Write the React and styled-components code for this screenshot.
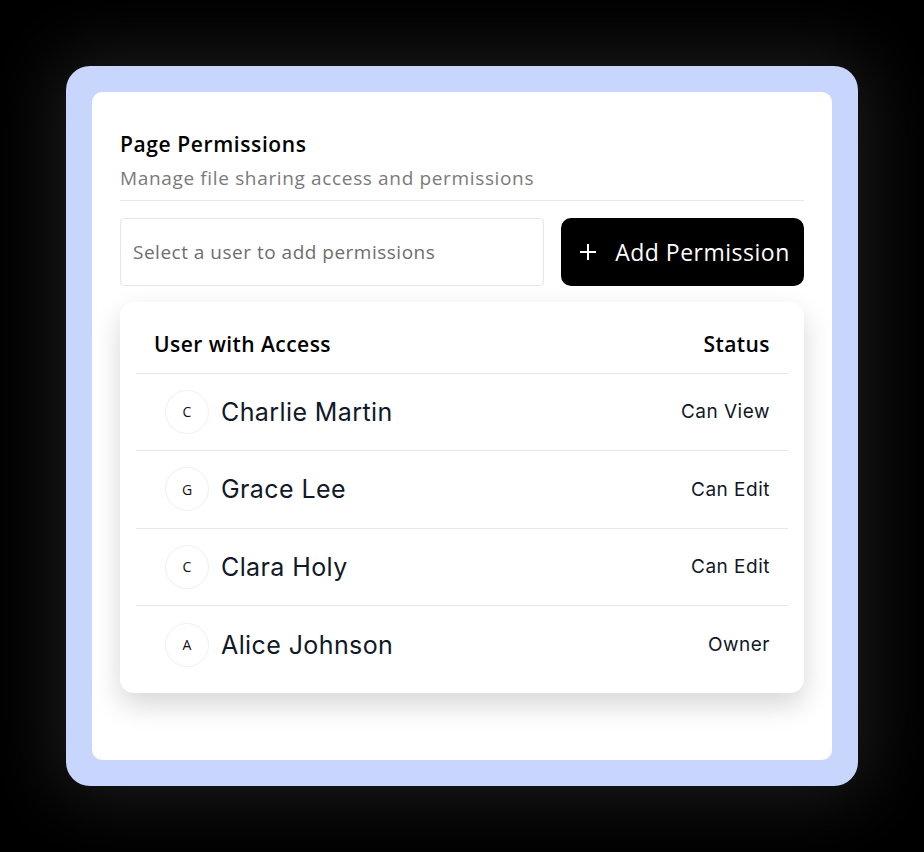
import React from "react";
import styled, { createGlobalStyle } from "styled-components";

const Global = createGlobalStyle`
  html, body { margin: 0; padding: 0; background: #000; }
  body { font-family: "Open Sans", "Liberation Sans", sans-serif; }
  * { box-sizing: border-box; }
`;

const Stage = styled.div`
  width: 924px;
  height: 852px;
  display: flex;
  align-items: center;
  justify-content: center;
  background: #000;
`;

const Frame = styled.div`
  width: 792px;
  height: 720px;
  padding: 26px;
  background: #c8d6fd;
  border-radius: 24px;
  box-shadow: 0 0 70px 12px rgba(255, 255, 255, 0.11);
`;

const Card = styled.div`
  height: 100%;
  background: #fff;
  border-radius: 10px;
  padding: 38px 28px 0;
  display: flex;
  flex-direction: column;
`;

const Title = styled.h2`
  margin: 0;
  font-family: "Open Sans", sans-serif;
  font-weight: 600;
  font-size: 21px;
  letter-spacing: 0.6px;
  line-height: 28px;
  color: #000;
`;

const Subtitle = styled.p`
  margin: 7px 0 0;
  font-family: "Open Sans", sans-serif;
  font-weight: 400;
  font-size: 19px;
  letter-spacing: 0.65px;
  line-height: 26px;
  color: #7a7a7a;
  padding-bottom: 9px;
  border-bottom: 1px solid #e8e8e8;
`;

const Controls = styled.div`
  display: flex;
  gap: 17px;
  margin-top: 17px;
`;

const Input = styled.input`
  flex: 1;
  height: 68px;
  border: 1px solid #e6e6e6;
  border-radius: 4px;
  padding: 0 12px;
  font-family: "Open Sans", sans-serif;
  font-size: 19px;
  letter-spacing: 0.5px;
  color: #222;
  outline: none;
  &::placeholder { color: #6e6e6e; }
`;

const Button = styled.button`
  width: 243px;
  height: 68px;
  border: none;
  border-radius: 10px;
  background: #000;
  color: #fff;
  display: flex;
  align-items: center;
  justify-content: center;
  gap: 18px;
  padding: 0 0 0 4px;
  font-family: "Open Sans", sans-serif;
  font-size: 23px;
  letter-spacing: 0.5px;
  font-weight: 400;
  cursor: pointer;
`;

const TableCard = styled.div`
  margin-top: 16px;
  background: #fff;
  border-radius: 14px;
  box-shadow: 0 12px 28px rgba(0, 0, 0, 0.16);
  padding: 0 16px 10px;
`;

const Table = styled.table`
  width: 100%;
  border-collapse: collapse;
`;

const Th = styled.th`
  height: 71px;
  padding: 14px 18px 0;
  text-align: ${(p) => p.$align || "left"};
  font-family: "Open Sans", sans-serif;
  font-weight: 600;
  font-size: 21px;
  letter-spacing: 0.45px;
  color: #000;
  border-bottom: 1px solid #e8e8e8;
`;

const Row = styled.tr`
  & + & td { border-top: 1px solid #e8e8e8; }
`;

const Td = styled.td`
  height: 77.5px;
  padding: 0 18px;
  text-align: ${(p) => p.$align || "left"};
  font-family: "Inter", sans-serif;
  font-size: 19px;
  letter-spacing: 0.5px;
  color: #111827;
`;

const User = styled.div`
  display: flex;
  align-items: center;
  gap: 12px;
  padding-left: 11px;
`;

const Avatar = styled.span`
  width: 44px;
  height: 44px;
  border-radius: 50%;
  border: 1px solid #f0f0f0;
  display: flex;
  align-items: center;
  justify-content: center;
  font-family: "Open Sans", sans-serif;
  font-size: 14px;
  letter-spacing: 0;
  color: #111;
`;

const Name = styled.span`
  font-family: "Inter", sans-serif;
  font-size: 25px;
  letter-spacing: 0.4px;
  color: #111827;
`;

const users = [
  { name: "Charlie Martin", status: "Can View" },
  { name: "Grace Lee", status: "Can Edit" },
  { name: "Clara Holy", status: "Can Edit" },
  { name: "Alice Johnson", status: "Owner" },
];

export default function App() {
  return (
    <>
      <Global />
      <Stage>
        <Frame>
          <Card>
            <Title>Page Permissions</Title>
            <Subtitle>Manage file sharing access and permissions</Subtitle>
            <Controls>
              <Input placeholder="Select a user to add permissions" />
              <Button>
                <svg width="18" height="18" viewBox="0 0 18 18" fill="none" stroke="#fff" strokeWidth="2">
                  <path d="M9 1v16M1 9h16" />
                </svg>
                Add Permission
              </Button>
            </Controls>
            <TableCard>
              <Table>
                <thead>
                  <tr>
                    <Th>User with Access</Th>
                    <Th $align="right">Status</Th>
                  </tr>
                </thead>
                <tbody>
                  {users.map((u) => (
                    <Row key={u.name}>
                      <Td>
                        <User>
                          <Avatar>{u.name[0]}</Avatar>
                          <Name>{u.name}</Name>
                        </User>
                      </Td>
                      <Td $align="right">{u.status}</Td>
                    </Row>
                  ))}
                </tbody>
              </Table>
            </TableCard>
          </Card>
        </Frame>
      </Stage>
    </>
  );
}
